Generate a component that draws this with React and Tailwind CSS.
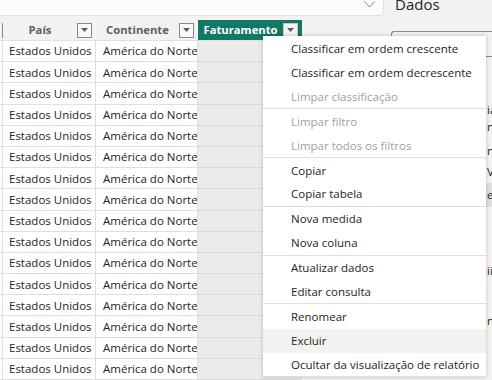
import React from "react";

const menuGroups = [
  [
    { label: "Classificar em ordem crescente" },
    { label: "Classificar em ordem decrescente" },
    { label: "Limpar classificação", disabled: true },
  ],
  [
    { label: "Limpar filtro", disabled: true },
    { label: "Limpar todos os filtros", disabled: true },
  ],
  [{ label: "Copiar" }, { label: "Copiar tabela" }],
  [{ label: "Nova medida" }, { label: "Nova coluna" }],
  [{ label: "Atualizar dados" }, { label: "Editar consulta" }],
  [
    { label: "Renomear" },
    { label: "Excluir", hover: true },
    { label: "Ocultar da visualização de relatório" },
  ],
];

// list of the Dados pane, mostly hidden under the menu
const paneItems = [
  { h: "h-[44px]", text: "" },
  { h: "h-[18px]", text: "ia" },
  { h: "h-[16px]", text: "nt" },
  { h: "h-[8px]", text: "" },
  { h: "h-[16px]", text: "n" },
  { h: "h-[4px]", text: "" },
  { h: "h-[18px]", text: "V" },
  { h: "h-[2px]", text: "" },
  { h: "h-[24px]", text: "e", active: true },
  { h: "h-[55px]", text: "" },
  { h: "h-[18px]", text: "iit" },
  { h: "h-[32px]", text: "" },
  { h: "h-[18px]", text: "nc" },
];

const rows = Array.from({ length: 16 }, (_, i) => i);

function FilterButton({ light }) {
  return (
    <div
      className={`w-[15px] h-[15px] border flex items-center justify-center ${
        light ? "bg-[#f3f2f1] border-[#c8c6c4]" : "bg-[#faf9f8] border-[#8a8886]"
      }`}
    >
      <svg width="7" height="4" viewBox="0 0 7 4">
        <path d="M0 0 L7 0 L3.5 4 Z" fill="#605e5c" />
      </svg>
    </div>
  );
}

function HeaderCell({ label, width, selected }) {
  return (
    <div
      className={`${width} h-full flex items-center pr-[3px] border-r ${
        selected ? "bg-[#117865] border-[#117865]" : "border-[#faf9f8]"
      }`}
    >
      <span
        className={`flex-1 text-center font-bold text-[11.25px] ${
          selected ? "text-white" : "text-[#605e5c]"
        }`}
      >
        {label}
      </span>
      <FilterButton light={selected} />
    </div>
  );
}

export default function App() {
  return (
    <div
      className="relative w-[492px] h-[380px] overflow-hidden bg-[#f3f2f1] flex"
      style={{ fontFamily: '"Segoe UI", "Open Sans", "Liberation Sans", sans-serif' }}
    >
      {/* main area */}
      <div className="w-[386px] flex flex-col shrink-0">
        <div className="h-[17px] w-[384px] bg-[#fbfbfb] border-b border-r border-[#e1dfdd] rounded-br-[4px] flex items-start justify-end pr-[8px] pt-[1px]">
          <svg width="11" height="7" viewBox="0 0 11 7">
            <path d="M0.5 0.5 L5.5 6 L10.5 0.5" fill="none" stroke="#8a8886" strokeWidth="1" />
          </svg>
        </div>
        <div className="h-[4px]" />

        {/* header */}
        <div className="h-[22px] flex border-b border-[#e1dfdd]">
          <div className="w-[3px] h-full flex items-center">
            <div className="w-[3px] h-[15px] border-r border-[#8a8886]" />
          </div>
          <HeaderCell label="País" width="w-[93px]" />
          <HeaderCell label="Continente" width="w-[102px]" />
          <HeaderCell label="Faturamento" width="w-[104px]" selected />
        </div>

        {/* rows */}
        {rows.map((r) => (
          <div key={r} className="h-[21.2px] flex shrink-0 text-[11.5px] text-[#252423]">
            <div className="w-[3px] bg-white border-r border-b border-[#e1dfdd]" />
            <div className="w-[93px] bg-white border-r border-b border-[#e1dfdd] pl-[6px] flex items-center whitespace-nowrap overflow-hidden">
              Estados Unidos
            </div>
            <div className="w-[102px] bg-white border-r border-b border-[#e1dfdd] pl-[7px] flex items-center whitespace-nowrap overflow-hidden">
              América do Norte
            </div>
            <div className="w-[104px] bg-[#edebe9] border-r border-b border-[#dcdad8]" />
          </div>
        ))}
      </div>

      {/* Dados pane */}
      <div className="flex-1 flex flex-col overflow-hidden">
        <div className="pl-[9px] -mt-[6px] h-[20px] shrink-0 text-[15px] leading-[20px] text-[#252423] whitespace-nowrap">
          Dados
        </div>
        <div className="ml-[5px] mt-[17px] h-[26px] border-t border-l border-b border-[#8a8886] rounded-tl-[3px] rounded-bl-[3px] w-[200px] shrink-0" />
        {paneItems.map((it, i) => (
          <div
            key={i}
            className={`${it.h} shrink-0 flex items-center pl-[101px] text-[11.5px] text-[#252423] whitespace-nowrap ${
              it.active ? "bg-[#e1dfdd]" : ""
            }`}
          >
            {it.text}
          </div>
        ))}
      </div>

      {/* context menu */}
      <div className="absolute left-[263px] top-[36px] w-[223px] bg-white shadow-[0_0_4px_rgba(0,0,0,0.22)]">
        {menuGroups.map((group) =>
          group.map((item, ii) => (
            <div
              key={item.label}
              className={`h-[24.4px] flex items-center pl-[28px] text-[11.5px] whitespace-nowrap ${
                ii === group.length - 1 ? "border-b border-[#e1dfdd]" : ""
              } ${item.hover ? "bg-[#f3f2f1]" : ""} ${
                item.disabled ? "text-[#a19f9d]" : "text-[#252423]"
              }`}
            >
              {item.label}
            </div>
          ))
        )}
      </div>
    </div>
  );
}
